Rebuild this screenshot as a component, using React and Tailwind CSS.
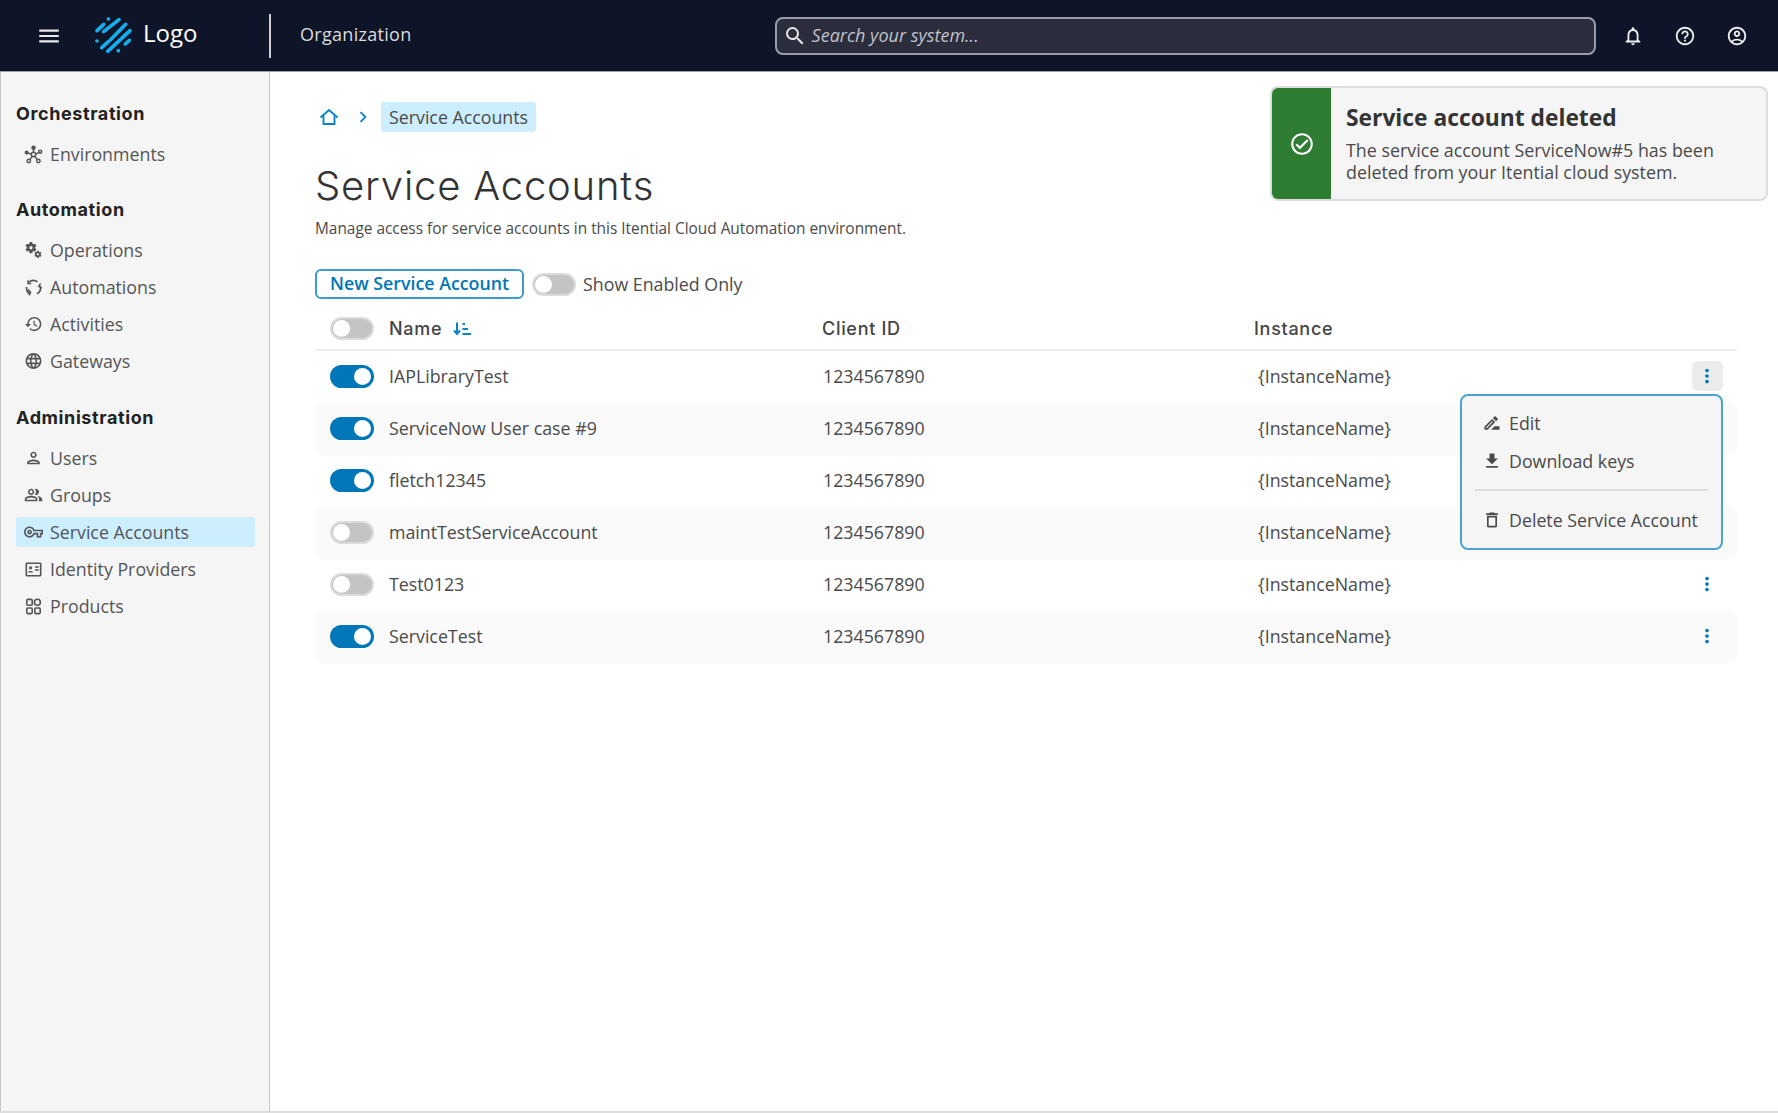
import {
  MdMenu, MdSearch, MdOutlineNotifications, MdOutlineHelpOutline, MdOutlineAccountCircle,
  MdChevronRight, MdMoreVert, MdOutlineCheckCircle,
  MdOutlineMiscellaneousServices, MdOutlineHistory, MdOutlineLanguage, MdOutlinePerson,
  MdOutlinePeopleAlt, MdOutlineVpnKey, MdOutlineDriveFileRenameOutline,
  MdFileDownload, MdOutlineDelete,
} from 'react-icons/md'

const heading = "font-['Inter',sans-serif]"

// Logo drawn as diagonal dashes
function Logo() {
  return (
    <svg width="60" height="50" viewBox="0 0 180 150" fill="none" stroke="#14aef0" strokeWidth="11" strokeLinecap="round">
      <path d="M70 27h.1" />
      <path d="M36 62L56 43" />
      <path d="M56 65L102 29" />
      <path d="M50 113L70 95" />
      <path d="M76 90L122 43" />
      <path d="M68 124L135 62" />
      <path d="M36 93h.1" />
      <path d="M121 102L133 91" />
      <path d="M100 122h.1" />
    </svg>
  )
}

function EnvIcon() {
  return (
    <svg width="19" height="19" viewBox="0 0 19 19" fill="none" stroke="#555" strokeWidth="1.5">
      <circle cx="9.5" cy="9.5" r="2.2" />
      <circle cx="9.5" cy="2.8" r="1.5" fill="#555" />
      <circle cx="2.6" cy="7.6" r="1.3" fill="#555" />
      <circle cx="16.2" cy="6.8" r="1.5" />
      <circle cx="4.8" cy="16" r="1.7" />
      <circle cx="14.4" cy="16" r="1.7" />
      <path d="M9.5 4.2V7.4M3.8 8L7.4 9M14.8 7.6L11.6 9M6 14.6L8.2 11.4M13.2 14.6L11 11.4" />
    </svg>
  )
}

function RecycleIcon() {
  return (
    <svg width="19" height="19" viewBox="0 0 19 19" fill="none" stroke="#555" strokeWidth="1.7">
      <path d="M5 4.2A7 7 0 0 1 13.5 3.8" />
      <path d="M16.4 8A7 7 0 0 1 13 15.8" />
      <path d="M6.2 16A7 7 0 0 1 2.6 9" />
      <path d="M4 2.2V5.6H7.2" strokeWidth="1.5" />
      <path d="M17.6 10.4L14.8 8.2L16.6 5.6" strokeWidth="1.5" />
      <path d="M4 11.6L6.6 14.2L5 17.4" strokeWidth="1.5" />
    </svg>
  )
}

function IdIcon() {
  return (
    <svg width="19" height="19" viewBox="0 0 19 19" fill="none" stroke="#555" strokeWidth="1.6">
      <rect x="2.3" y="3.3" width="14.4" height="12.4" rx="0.6" />
      <circle cx="6.6" cy="7.8" r="1.6" fill="#555" stroke="none" />
      <path d="M4 12.6C4.4 10.6 8.8 10.6 9.2 12.6Z" fill="#555" stroke="none" />
      <path d="M11 7H14.8M11 10H14.8" strokeWidth="1.3" />
    </svg>
  )
}

function ProductsIcon() {
  return (
    <svg width="19" height="19" viewBox="0 0 19 19" fill="none" stroke="#555" strokeWidth="1.6">
      <rect x="2.8" y="2.4" width="5.4" height="5.8" rx="1" />
      <circle cx="13.4" cy="5.3" r="3" />
      <rect x="2.8" y="11" width="5.4" height="5.6" rx="1" />
      <rect x="10.8" y="11" width="5.4" height="5.6" rx="1" />
    </svg>
  )
}

function HomeIcon() {
  return (
    <svg width="20" height="20" viewBox="0 0 20 20" fill="none" stroke="#0a84c6" strokeWidth="1.9">
      <path d="M1.5 10.5L10 3L18.5 10.5" />
      <path d="M4.5 8.5V17H15.5V8.5" />
    </svg>
  )
}

function SortIcon() {
  return (
    <svg width="18" height="16" viewBox="0 0 18 16" fill="none" stroke="#0a84c6" strokeWidth="2">
      <path d="M4 1.5V12.5M1 9.5L4 13L7 9.5" />
      <path d="M9.5 3H12M9.5 8H15M9.5 13H18" />
    </svg>
  )
}

function Toggle({ on }) {
  return on ? (
    <div className="flex h-[23px] w-[44px] shrink-0 items-center justify-end rounded-full bg-[#0077b8] pr-[3px]">
      <div className="h-[17px] w-[17px] rounded-full bg-white" />
    </div>
  ) : (
    <div className="flex h-[23px] w-[44px] shrink-0 items-center rounded-full border-2 border-[#dcdcdc] bg-[#c4c4c4] pl-px">
      <div className="h-[17px] w-[17px] rounded-full bg-white" />
    </div>
  )
}

function NavItem({ icon, label, active }) {
  return (
    <div className={`flex h-[30px] items-center gap-[7px] rounded-[3px] pl-[8px] text-[17.8px] text-[#555] ${active ? 'bg-[#cdeeff]' : ''}`}>
      <span className="flex w-[19px] justify-center text-[20px] text-[#555]">{icon}</span>
      {label}
    </div>
  )
}

function NavSection({ title, className = 'mb-[28px]', children }) {
  return (
    <div className={className}>
      <div className={`mb-[14px] flex h-[24px] items-center text-[18px] font-bold tracking-[0.6px] text-[#222] ${heading}`}>{title}</div>
      <div className="flex flex-col gap-[7px]">{children}</div>
    </div>
  )
}

const rows = [
  { name: 'IAPLibraryTest', on: true, active: true },
  { name: 'ServiceNow User case #9', on: true },
  { name: 'fletch12345', on: true },
  { name: 'maintTestServiceAccount', on: false },
  { name: 'Test0123', on: false },
  { name: 'ServiceTest', on: true },
]

function Row({ row, index }) {
  return (
    <div className={`grid h-[52px] grid-cols-[508px_435px_1fr] items-center rounded-[8px] pb-[2px] text-[17.8px] text-[#4a4a4a] ${index % 2 ? 'bg-[#fafafa]' : ''}`}>
      <div className="flex items-center gap-[15px] pl-[15px]">
        <Toggle on={row.on} />
        {row.name}
      </div>
      <div>1234567890</div>
      <div className="flex items-center justify-between pr-[14px]">
        {'{InstanceName}'}
        {index !== 1 && index !== 2 && index !== 3 && (
          <div className={`flex h-[30px] w-[31px] items-center justify-center rounded-[6px] pr-px text-[22px] text-[#0077b8] ${row.active ? 'bg-[#ececec]' : ''}`}>
            <MdMoreVert />
          </div>
        )}
      </div>
    </div>
  )
}

export default function App() {
  return (
    <div className="flex h-[1113px] w-full flex-col bg-white font-['Open_Sans',sans-serif] text-[17.8px]">
      {/* Top bar */}
      <header className="flex h-[72px] shrink-0 items-center border-b border-[#9aa0ac] bg-[#0f1528] pr-[30px]">
        <div className="flex w-[269px] items-center pl-[36px]">
          <MdMenu className="text-[26px] text-[#e8e8e8]" />
          <div className="-mt-[2px] ml-[23px]"><Logo /></div>
          <span className="-ml-[2px] -mt-[6px] text-[24px] text-white">Logo</span>
        </div>
        <div className="h-[44px] w-[2px] bg-[#d0d0d0]" />
        <span className="-mt-[2px] ml-[29px] text-[18px] tracking-[0.3px] text-[#dcdcdc]">Organization</span>
        <div className="ml-[363px] flex h-[38px] w-[821px] items-center gap-[5px] rounded-[8px] border-2 border-[#9a9ca8] bg-[#2b2d3d] pl-[6px]">
          <MdSearch className="text-[24px] text-[#e8e8e8]" />
          <span className="text-[18px] italic text-[#c0c0c8]">Search your system...</span>
        </div>
        <div className="ml-auto flex items-center gap-[30px] text-[22px] text-[#eeeeee]">
          <MdOutlineNotifications />
          <MdOutlineHelpOutline />
          <MdOutlineAccountCircle />
        </div>
      </header>

      <div className="flex min-h-0 flex-1 border-b-2 border-[#dddddd]">
        {/* Sidebar */}
        <aside className="w-[270px] shrink-0 border-x border-x-[#c8c8c8] bg-[#f5f5f5] pl-[15px] pr-[14px] pt-[29px]">
          <NavSection title="Orchestration">
            <NavItem icon={<EnvIcon />} label="Environments" />
          </NavSection>
          <NavSection title="Automation" className="mb-[29px]">
            <NavItem icon={<MdOutlineMiscellaneousServices />} label="Operations" />
            <NavItem icon={<RecycleIcon />} label="Automations" />
            <NavItem icon={<MdOutlineHistory />} label="Activities" />
            <NavItem icon={<MdOutlineLanguage />} label="Gateways" />
          </NavSection>
          <NavSection title="Administration">
            <NavItem icon={<MdOutlinePerson />} label="Users" />
            <NavItem icon={<MdOutlinePeopleAlt />} label="Groups" />
            <NavItem icon={<MdOutlineVpnKey />} label="Service Accounts" active />
            <NavItem icon={<IdIcon />} label="Identity Providers" />
            <NavItem icon={<ProductsIcon />} label="Products" />
          </NavSection>
        </aside>

        {/* Main content */}
        <main className="relative flex-1 pl-[45px] pr-[41px] pt-[30px]">
          <div className="flex h-[30px] items-center">
            <div className="ml-[4px]"><HomeIcon /></div>
            <MdChevronRight className="ml-[13px] text-[22px] text-[#0a84c6]" />
            <div className="ml-[7px] flex h-[30px] items-center rounded-[3px] bg-[#cdeeff] px-[8px] text-[#4a4a4a]">Service Accounts</div>
          </div>

          <h1 className={`mt-[26px] text-[40px] font-light leading-[56px] tracking-[0.8px] text-[#333] ${heading}`}>Service Accounts</h1>
          <p className="mt-[4px] text-[15.4px] leading-[22px] text-[#4a4a4a]">Manage access for service accounts in this Itential Cloud Automation environment.</p>

          <div className="mt-[29px] flex items-center">
            <button className="h-[30px] rounded-[6px] border-2 border-[#3d9bd0] px-[13px] text-[17.8px] font-semibold leading-none text-[#0077b8]">New Service Account</button>
            <div className="ml-[8px]"><Toggle on={false} /></div>
            <span className="ml-[7px] text-[#4a4a4a]">Show Enabled Only</span>
          </div>

          {/* Table */}
          <div className={`mt-[7px] grid h-[45px] grid-cols-[507px_432px_1fr] items-center border-b-2 border-[#eeeeee] pt-[2px] text-[18px] font-medium tracking-[0.7px] text-[#444] ${heading}`}>
            <div className="flex items-center gap-[15px] pl-[15px]">
              <Toggle on={false} />
              Name
              <div className="-ml-[4px]"><SortIcon /></div>
            </div>
            <div>Client ID</div>
            <div>Instance</div>
          </div>
          {rows.map((row, i) => (
            <Row key={row.name} row={row} index={i} />
          ))}

          {/* Toast */}
          <div className="absolute left-[1000px] top-[14px] flex h-[115px] w-[498px] overflow-hidden rounded-[8px] border-2 border-[#dddddd] bg-[#f5f5f5]">
            <div className="flex w-[59px] items-center justify-center bg-[#2e7d32] text-[26px] text-white">
              <MdOutlineCheckCircle />
            </div>
            <div className="pl-[15px] pt-[14px]">
              <div className="text-[22.8px] font-bold leading-[32px] text-[#333]">Service account deleted</div>
              <div className="mt-[5px] text-[17.85px] leading-[22px] text-[#4a4a4a]">
                The service account ServiceNow#5 has been
                <br />
                deleted from your Itential cloud system.
              </div>
            </div>
          </div>

          {/* Row menu */}
          <div className="absolute left-[1190px] top-[322px] h-[156px] w-[263px] rounded-[8px] border-2 border-[#4ba3d3] bg-[#f5f5f5] px-[13px] pt-[8px] text-[#4a4a4a]">
            <div className="flex h-[38px] items-center gap-[7px] pl-[7px]">
              <MdOutlineDriveFileRenameOutline className="text-[20px]" />
              Edit
            </div>
            <div className="flex h-[38px] items-center gap-[7px] pl-[7px]">
              <MdFileDownload className="text-[20px]" />
              Download keys
            </div>
            <div className="mt-[9px] h-[2px] bg-[#dddddd]" />
            <div className="mt-[10px] flex h-[38px] items-center gap-[7px] pl-[7px] whitespace-nowrap">
              <MdOutlineDelete className="text-[20px]" />
              Delete Service Account
            </div>
          </div>
        </main>
      </div>
    </div>
  )
}
